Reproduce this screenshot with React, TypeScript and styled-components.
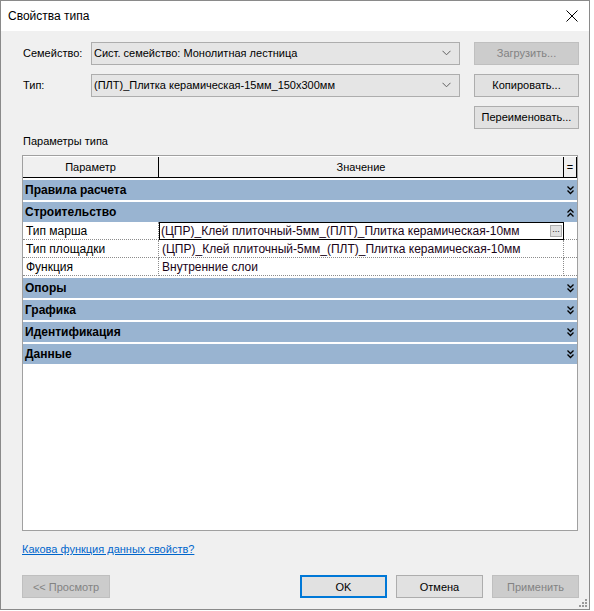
import React from "react";
import styled, { createGlobalStyle, css } from "styled-components";

const Global = createGlobalStyle`
  html, body { margin: 0; padding: 0; background: #ffffff; }
  body { font-family: "Liberation Sans", Arial, sans-serif; font-size: 11px; color: #000; }
  * { box-sizing: border-box; }
`;

const Window = styled.div`
  position: relative;
  width: 590px;
  height: 610px;
  border: 1px solid #8a8a8a;
  background: #f0f0f0;
  display: flex;
  flex-direction: column;
`;

const TitleBar = styled.div`
  height: 30px;
  background: #ffffff;
  display: flex;
  align-items: center;
  justify-content: space-between;
  padding: 0 7px 0 7px;
`;

const Title = styled.span`
  font-size: 12px;
  color: #000;
`;

const Close = styled.div`
  width: 14px;
  height: 14px;
  display: flex;
  align-items: center;
  justify-content: center;
  margin-right: 3px;
`;

const Body = styled.div`
  flex: 1;
  display: flex;
  flex-direction: column;
  padding: 10px 10px 0 21px;
`;

const TopGrid = styled.div`
  display: grid;
  grid-template-columns: 69px 1fr 105px;
  row-gap: 8px;
  grid-auto-rows: 24px;
  align-items: center;
`;

const FieldLabel = styled.span`
  font-size: 11px;
  padding-left: 1px;
`;

const Combo = styled.div`
  height: 23px;
  margin-right: 14px;
  border: 1px solid #adadad;
  background: #e5e5e5;
  display: flex;
  align-items: center;
  justify-content: space-between;
  padding: 0 8px 0 2px;
  font-size: 11px;
`;

const Button = styled.div<{ $disabled?: boolean; $default?: boolean; $w?: number }>`
  height: 23px;
  ${(p) => p.$w && css`width: ${p.$w}px;`}
  border: 1px solid #adadad;
  background: #e1e1e1;
  display: flex;
  align-items: center;
  justify-content: center;
  font-size: 11px;
  color: #000;
  ${(p) =>
    p.$disabled &&
    css`
      background: #cccccc;
      border-color: #bfbfbf;
      color: #838383;
    `}
  ${(p) =>
    p.$default &&
    css`
      border: 2px solid #0078d7;
    `}
`;

const SectionLabel = styled.div`
  margin-top: 5px;
  line-height: 15px;
  font-size: 11px;
  padding-left: 1px;
`;

const Table = styled.div`
  margin-top: 6px;
  margin-right: 1px;
  height: 376px;
  border: 1px solid #a0a0a0;
  background: #ffffff;
  display: flex;
  flex-direction: column;
  font-size: 12px;
`;

const HeaderRow = styled.div`
  display: flex;
  height: 22px;
  background: #f0f0f0;
  border-top: 1px solid #ffffff;
  border-bottom: 1px solid #000;
  font-size: 11px;
`;

const HeaderCell = styled.div<{ $w?: number }>`
  ${(p) => (p.$w ? css`width: ${p.$w}px;` : css`flex: 1;`)}
  display: flex;
  align-items: center;
  justify-content: center;
  border-right: 1px solid #000;
`;

const GroupRow = styled.div`
  margin-top: 2px;
  height: 20px;
  background: #99b4d1;
  display: flex;
  align-items: center;
  font-weight: bold;
  padding-left: 2px;
`;

const GroupName = styled.span`
  flex: 1;
`;

const ChevronCell = styled.div`
  width: 13px;
  display: flex;
  align-items: center;
  justify-content: center;
`;

const PropRow = styled.div`
  display: flex;
  height: 18px;
`;

const PropCell = styled.div<{ $w?: number; $selected?: boolean; $noRight?: boolean }>`
  ${(p) => (p.$w ? css`width: ${p.$w}px;` : css`flex: 1;`)}
  display: flex;
  align-items: center;
  padding-left: 3px;
  border-bottom: 1px dotted #8c8c8c;
  border-right: 1px dotted #8c8c8c;
  ${(p) => p.$noRight && css`border-right: 0;`}
  white-space: nowrap;
  overflow: hidden;
  ${(p) =>
    p.$selected &&
    css`
      border: 1px solid #000;
      padding-left: 1px;
      justify-content: space-between;
      padding-right: 1px;
    `}
`;

const ValueText = styled.span`
  color: #1a0418;
`;

const DotsButton = styled.div`
  width: 12px;
  height: 12px;
  border: 1px solid #adadad;
  background: #e1e1e1;
  font-size: 9px;
  line-height: 6px;
  text-align: center;
  color: #222;
`;

const HelpLink = styled.a`
  margin-top: 10px;
  line-height: 16px;
  color: #0066cc;
  text-decoration: underline;
  font-size: 11px;
  align-self: flex-start;
`;

const Footer = styled.div`
  margin-top: 18px;
  display: flex;
  gap: 9px;
`;

const Spacer = styled.div`
  flex: 1;
`;

const Grip = styled.div`
  position: absolute;
  right: 1px;
  bottom: 1px;
  width: 10px;
  height: 10px;
`;

const ComboChevron = () => (
  <svg width="9" height="6" viewBox="0 0 9 6">
    <path d="M0.5 0.8 L4.5 4.8 L8.5 0.8" fill="none" stroke="#606060" strokeWidth="1" />
  </svg>
);

const DoubleChevron = ({ up }: { up?: boolean }) => (
  <svg width="7" height="9" viewBox="0 0 7 9" style={up ? { transform: "rotate(180deg)" } : undefined}>
    <path d="M0.5 0.5 L3.5 3.5 L6.5 0.5 M0.5 4.5 L3.5 7.5 L6.5 4.5" fill="none" stroke="#000" strokeWidth="1.3" />
  </svg>
);

const groupsTop = ["Правила расчета"];
const groupsBottom = ["Опоры", "Графика", "Идентификация", "Данные"];
const value = "(ЦПР)_Клей плиточный-5мм_(ПЛТ)_Плитка керамическая-10мм";

export default function App() {
  return (
    <>
      <Global />
      <Window>
        <TitleBar>
          <Title>Свойства типа</Title>
          <Close>
            <svg width="12" height="12" viewBox="0 0 12 12">
              <path d="M0.5 0.5 L11.5 11.5 M11.5 0.5 L0.5 11.5" stroke="#000" strokeWidth="1" />
            </svg>
          </Close>
        </TitleBar>
        <Body>
          <TopGrid>
            <FieldLabel>Семейство:</FieldLabel>
            <Combo>
              <span>Сист. семейство: Монолитная лестница</span>
              <ComboChevron />
            </Combo>
            <Button $disabled>Загрузить...</Button>
            <FieldLabel>Тип:</FieldLabel>
            <Combo>
              <span>(ПЛТ)_Плитка керамическая-15мм_150x300мм</span>
              <ComboChevron />
            </Combo>
            <Button>Копировать...</Button>
            <span />
            <span />
            <Button>Переименовать...</Button>
          </TopGrid>
          <SectionLabel>Параметры типа</SectionLabel>
          <Table>
            <HeaderRow>
              <HeaderCell $w={136}>Параметр</HeaderCell>
              <HeaderCell>Значение</HeaderCell>
              <HeaderCell $w={13}>=</HeaderCell>
            </HeaderRow>
            {groupsTop.map((g) => (
              <GroupRow key={g}>
                <GroupName>{g}</GroupName>
                <ChevronCell>
                  <DoubleChevron />
                </ChevronCell>
              </GroupRow>
            ))}
            <GroupRow>
              <GroupName>Строительство</GroupName>
              <ChevronCell>
                <DoubleChevron up />
              </ChevronCell>
            </GroupRow>
            <PropRow>
              <PropCell $w={136}>Тип марша</PropCell>
              <PropCell $selected>
                <ValueText>{value}</ValueText>
                <DotsButton>...</DotsButton>
              </PropCell>
              <PropCell $w={13} $noRight />
            </PropRow>
            <PropRow>
              <PropCell $w={136}>Тип площадки</PropCell>
              <PropCell>
                <ValueText>{value}</ValueText>
              </PropCell>
              <PropCell $w={13} $noRight />
            </PropRow>
            <PropRow>
              <PropCell $w={136}>Функция</PropCell>
              <PropCell>
                <ValueText>Внутренние слои</ValueText>
              </PropCell>
              <PropCell $w={13} $noRight />
            </PropRow>
            {groupsBottom.map((g) => (
              <GroupRow key={g}>
                <GroupName>{g}</GroupName>
                <ChevronCell>
                  <DoubleChevron />
                </ChevronCell>
              </GroupRow>
            ))}
          </Table>
          <HelpLink href="#">Какова функция данных свойств?</HelpLink>
          <Footer>
            <Button $disabled $w={88}>
              &lt;&lt; Просмотр
            </Button>
            <Spacer />
            <Button $default $w={87}>
              OK
            </Button>
            <Button $w={87}>Отмена</Button>
            <Button $disabled $w={87}>
              Применить
            </Button>
          </Footer>
        </Body>
        <Grip>
          <svg width="10" height="10" viewBox="0 0 10 10">
            <g fill="#9a9a9a">
              <rect x="7" y="1" width="2" height="2" />
              <rect x="4" y="4" width="2" height="2" />
              <rect x="7" y="4" width="2" height="2" />
              <rect x="1" y="7" width="2" height="2" />
              <rect x="4" y="7" width="2" height="2" />
              <rect x="7" y="7" width="2" height="2" />
            </g>
          </svg>
        </Grip>
      </Window>
    </>
  );
}
